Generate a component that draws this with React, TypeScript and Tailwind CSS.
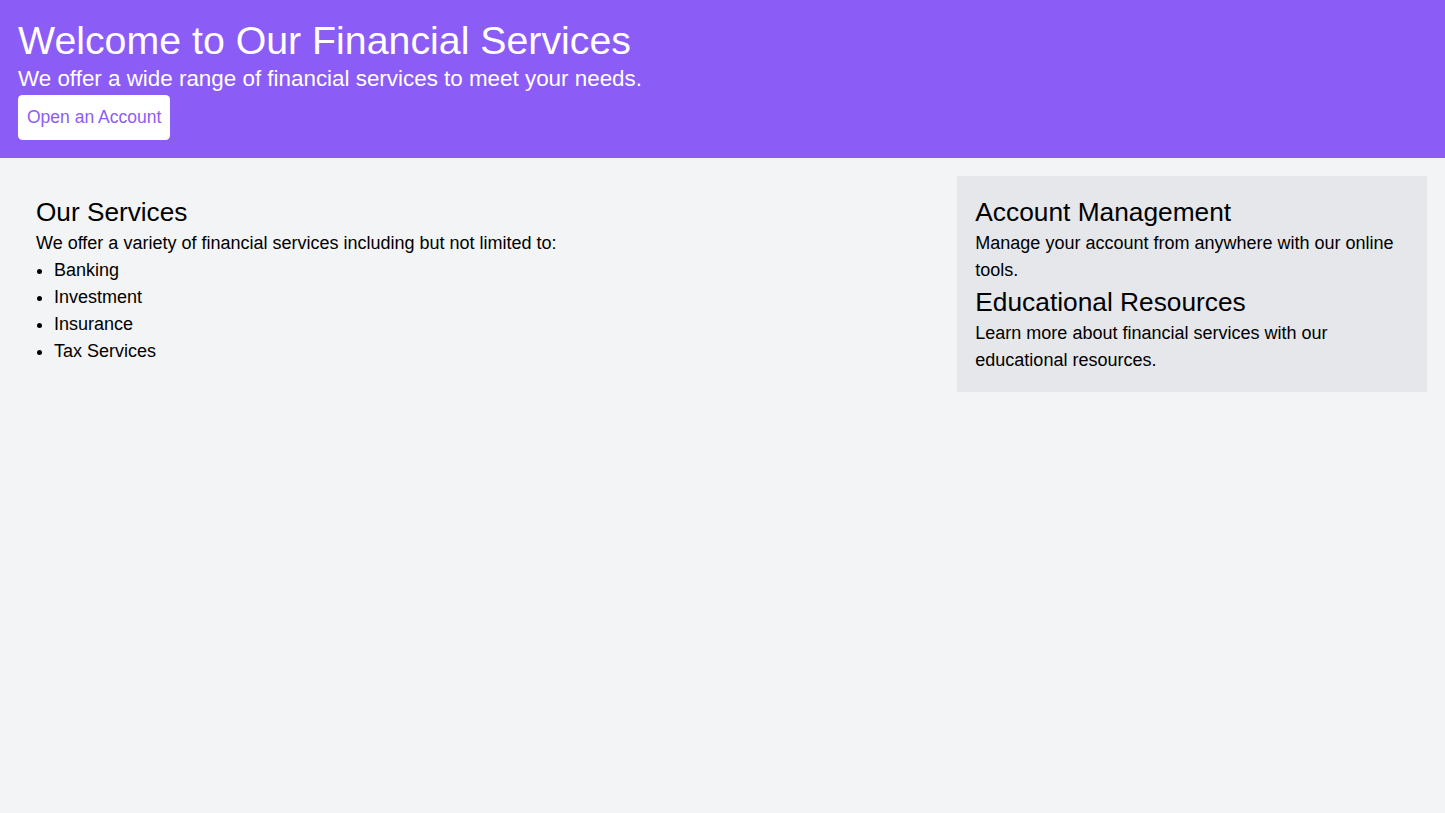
export default function App() {
  const services = ['Banking', 'Investment', 'Insurance', 'Tax Services']

  return (
    <div className="min-h-[813px] bg-[#f3f4f6] font-['Liberation_Sans',Arial,sans-serif] text-black">
      {/* Hero */}
      <header className="bg-[#8b5cf6] p-[18px] text-white">
        <h1 className="text-[39.3px] leading-[45px]">Welcome to Our Financial Services</h1>
        <p className="text-[22.4px] leading-[31.5px]">We offer a wide range of financial services to meet your needs.</p>
        <button className="rounded-[4.5px] bg-white px-[9px] py-[9px] text-[17.5px] leading-[27px] text-[#8b5cf6]">
          Open an Account
        </button>
      </header>

      <main className="flex p-[18px]">
        <section className="w-2/3 p-[18px]">
          <h2 className="text-[26.2px] leading-[36px]">Our Services</h2>
          <p className="text-[18px] leading-[27px]">We offer a variety of financial services including but not limited to:</p>
          <ul className="list-disc pl-[18px] text-[18px] leading-[27px]">
            {services.map(s => (
              <li key={s}>{s}</li>
            ))}
          </ul>
        </section>

        <aside className="w-1/3 self-start bg-[#e5e7eb] p-[18px]">
          <h2 className="text-[26.3px] leading-[36px]">Account Management</h2>
          <p className="text-[18px] leading-[27px]">Manage your account from anywhere with our online tools.</p>
          <h2 className="text-[26.3px] leading-[36px]">Educational Resources</h2>
          <p className="text-[18px] leading-[27px]">Learn more about financial services with our educational resources.</p>
        </aside>
      </main>
    </div>
  )
}
